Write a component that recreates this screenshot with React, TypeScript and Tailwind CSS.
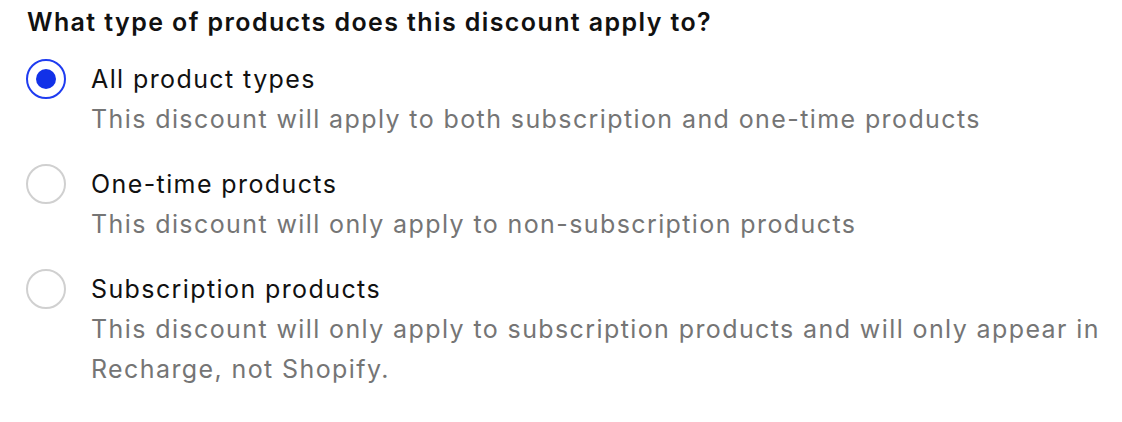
import React, { useState } from "react";

const options = [
  {
    id: "all",
    label: "All product types",
    desc: "This discount will apply to both subscription and one-time products",
  },
  {
    id: "one",
    label: "One-time products",
    desc: "This discount will only apply to non-subscription products",
  },
  {
    id: "sub",
    label: "Subscription products",
    desc: "This discount will only apply to subscription products and will only appear in Recharge, not Shopify.",
  },
];

export default function App() {
  const [sel, setSel] = useState("all");
  return (
    <div
      className="w-[1122px] h-[422px] bg-white pl-[26px] pt-[6px] pr-[16px]"
      style={{ fontFamily: "Inter, 'Noto Sans', sans-serif" }}
    >
      <h2 className="text-[25px] leading-[32px] font-semibold tracking-[1.4px] text-[#111111] pl-[1px]">
        What type of products does this discount apply to?
      </h2>
      <div className="mt-[21px] flex flex-col gap-[25px]">
        {options.map((o) => {
          const on = sel === o.id;
          return (
            <label key={o.id} className="flex gap-[25px] cursor-pointer" onClick={() => setSel(o.id)}>
              <span
                className={
                  on
                    ? "shrink-0 w-[40px] h-[40px] rounded-full border-2 border-[#1f3cf0] flex items-center justify-center"
                    : "shrink-0 w-[40px] h-[40px] rounded-full border-2 border-[#d0d0d0] flex items-center justify-center"
                }
              >
                {on && <span className="w-[20px] h-[20px] rounded-full bg-[#1231e8]" />}
              </span>
              <div className="flex flex-col tracking-[1.4px]">
                <span className="text-[25px] leading-[40px] text-[#111111]">{o.label}</span>
                <span className="text-[25px] leading-[40px] text-[#757575]">{o.desc}</span>
              </div>
            </label>
          );
        })}
      </div>
    </div>
  );
}
